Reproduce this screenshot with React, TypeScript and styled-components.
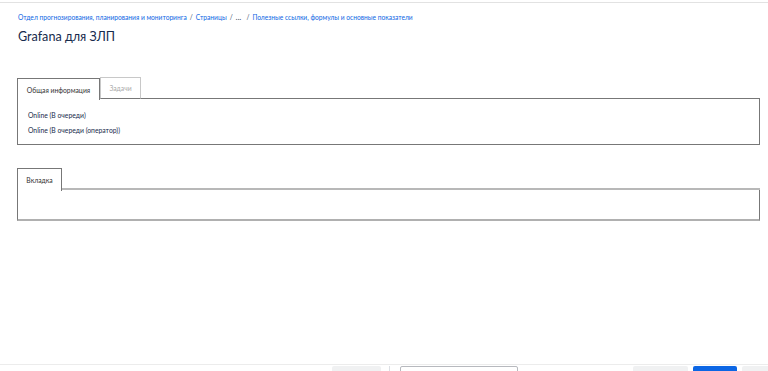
import React from "react";
import styled, { createGlobalStyle } from "styled-components";

const Global = createGlobalStyle`
  html, body { margin: 0; padding: 0; background: #fff; }
  body { font-family: Lato, "Noto Sans", sans-serif; color: #172b4d; }
  #root { height: 100vh; }
`;

const Page = styled.div`
  height: 100vh;
  display: flex;
  flex-direction: column;
  overflow: hidden;
`;

const TopStrip = styled.div`
  height: 2px;
  border-bottom: 1px solid #e2e2e2;
  flex: none;
`;

const Main = styled.main`
  flex: 1;
  padding: 9px 8px 0 17px;
`;

const Breadcrumbs = styled.nav`
  display: flex;
  align-items: center;
  gap: 3px;
  font-size: 6.65px;
  line-height: 10px;
  color: #0c66e4;
  padding-left: 1px;
`;

const Crumb = styled.span<{ $dots?: boolean }>`
  color: ${(p) => (p.$dots ? "#44546f" : "#0c66e4")};
  font-weight: ${(p) => (p.$dots ? 700 : 400)};
  letter-spacing: ${(p) => (p.$dots ? "0.3px" : "0")};
  margin: ${(p) => (p.$dots ? "0 2px 0 0" : "0")};
`;

const Sep = styled.span`
  color: #44546f;
`;

const Title = styled.h1`
  margin: 6px 0 0 1px;
  font-size: 12.6px;
  line-height: 18px;
  font-weight: 400;
  color: #172b4d;
`;

const TabsBlock = styled.section<{ $top: number }>`
  margin-top: ${(p) => p.$top}px;
  width: 743px;
`;

const TabRow = styled.div`
  display: flex;
  align-items: flex-end;
`;

const Tab = styled.div<{ $active?: boolean; $w: number; $h: number }>`
  width: ${(p) => p.$w}px;
  height: ${(p) => p.$h}px;
  box-sizing: border-box;
  display: flex;
  align-items: center;
  justify-content: center;
  font-size: 6.8px;
  color: ${(p) => (p.$active ? "#333" : "#aaa")};
  border: 1px solid ${(p) => (p.$active ? "#777" : "#c8c8c8")};
  border-bottom: ${(p) => (p.$active ? "none" : "1px solid #777")};
  background: #fff;
  position: relative;
  z-index: 1;
  margin-bottom: ${(p) => (p.$active ? "-1px" : "0")};
`;

const TabFill = styled.div<{ $color: string; $thick: number }>`
  flex: 1;
  border-bottom: ${(p) => p.$thick}px solid ${(p) => p.$color};
`;

const Panel = styled.div<{ $h: number; $soft?: boolean }>`
  height: ${(p) => p.$h}px;
  box-sizing: border-box;
  border: 1px solid #777;
  border-top: none;
  border-bottom: ${(p) => (p.$soft ? "2px solid #b0b0b0" : "1px solid #777")};
  padding: 11px 10px 0;
  display: flex;
  flex-direction: column;
  gap: 5px;
`;

const Line = styled.div`
  font-size: 6.8px;
  line-height: 10px;
  color: #172b4d;
`;

const Footer = styled.footer`
  flex: none;
  height: 5px;
  border-top: 1px solid #ececec;
  display: flex;
  align-items: flex-start;
  padding-top: 1px;
`;

const FootBox = styled.div<{ $w: number; $ml: number; $kind?: "gray" | "blue" | "input" }>`
  width: ${(p) => p.$w}px;
  margin-left: ${(p) => p.$ml}px;
  height: 8px;
  box-sizing: border-box;
  border-radius: 2px;
  background: ${(p) =>
    p.$kind === "blue" ? "#0c66e4" : p.$kind === "input" ? "#fff" : "#f0f1f2"};
  border: ${(p) => (p.$kind === "input" ? "1px solid #b7b9be" : "none")};
  flex: none;
`;

const FootDivider = styled.div<{ $ml: number }>`
  width: 1px;
  height: 8px;
  background: #dcdfe4;
  margin-left: ${(p) => p.$ml}px;
  flex: none;
`;

export default function App() {
  return (
    <>
      <Global />
      <Page>
        <TopStrip />
        <Main>
          <Breadcrumbs>
            <Crumb>Отдел прогнозирования, планирования и мониторинга</Crumb>
            <Sep>/</Sep>
            <Crumb>Страницы</Crumb>
            <Sep>/</Sep>
            <Crumb $dots>...</Crumb>
            <Sep>/</Sep>
            <Crumb>Полезные ссылки, формулы и основные показатели</Crumb>
          </Breadcrumbs>
          <Title>Grafana для ЗЛП</Title>

          <TabsBlock $top={31}>
            <TabRow>
              <Tab $active $w={83} $h={22}>Общая информация</Tab>
              <Tab $w={41} $h={22}>Задачи</Tab>
              <TabFill $color="#777" $thick={1} />
            </TabRow>
            <Panel $h={46}>
              <Line>Online (В очереди)</Line>
              <Line>Online (В очереди (оператор))</Line>
            </Panel>
          </TabsBlock>

          <TabsBlock $top={23}>
            <TabRow>
              <Tab $active $w={45} $h={23}>Вкладка</Tab>
              <TabFill $color="#b8b8b8" $thick={2} />
            </TabRow>
            <Panel $h={31} $soft />
          </TabsBlock>
        </Main>
        <Footer>
          <FootBox $w={49} $ml={332} />
          <FootDivider $ml={8} />
          <FootBox $w={118} $ml={10} $kind="input" />
          <FootBox $w={55} $ml={115} />
          <FootBox $w={44} $ml={5} $kind="blue" />
          <FootBox $w={40} $ml={5} />
        </Footer>
      </Page>
    </>
  );
}
